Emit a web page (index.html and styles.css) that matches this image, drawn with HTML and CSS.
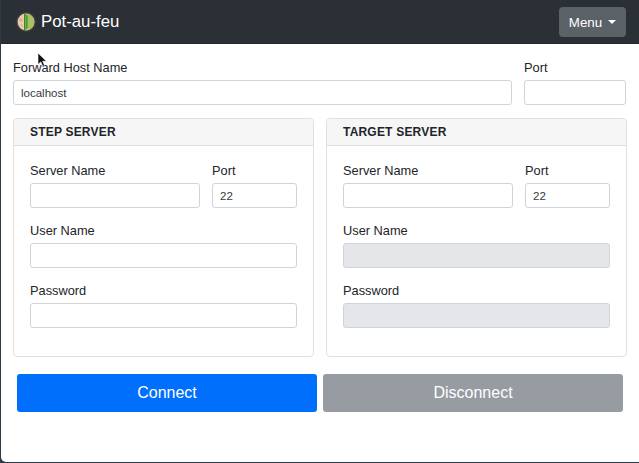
FILE: index.html
```html
<!DOCTYPE html>
<html lang="en">
<head>
<meta charset="utf-8">
<title>Pot-au-feu</title>
<link rel="stylesheet" href="styles.css">
</head>
<body>
<div class="window">
  <nav class="navbar">
    <div class="brand">
      <svg class="logo" width="20" height="20" viewBox="0 0 20 20">
        <circle cx="10" cy="10" r="10" fill="#3f403c"/>
        <circle cx="10" cy="10" r="8.4" fill="#e8cdb4"/>
        <path d="M8 1.84a8.4 8.4 0 0 1 0 16.32z" fill="#2f8a2c"/>
        <path d="M11.5 1.74a8.4 8.4 0 0 1 0 16.52z" fill="#a9c163"/>
        <path d="M9.7 1.7v16.6" stroke="#86b53a" stroke-width="1.2" fill="none"/>
        <path d="M3 7l3-1 1 3-3 1zM3.5 13l3-1 .8 3z" fill="#e3ad97"/>
      </svg>
      <span>Pot-au-feu</span>
    </div>
    <button class="menu">Menu<span class="caret"></span></button>
  </nav>
  <main class="content">
    <div class="row host-row">
      <div class="field grow"><label>Forward Host Name</label><input class="input" value="localhost"></div>
      <div class="field port-wide"><label>Port</label><input class="input"></div>
    </div>
    <div class="cards">
      <section class="card">
        <h2 class="card-header">STEP SERVER</h2>
        <div class="card-body">
          <div class="row">
            <div class="field grow"><label>Server Name</label><input class="input"></div>
            <div class="field port"><label>Port</label><input class="input" value="22"></div>
          </div>
          <div class="field"><label>User Name</label><input class="input"></div>
          <div class="field"><label>Password</label><input class="input" type="password"></div>
        </div>
      </section>
      <section class="card">
        <h2 class="card-header">TARGET SERVER</h2>
        <div class="card-body">
          <div class="row">
            <div class="field grow"><label>Server Name</label><input class="input"></div>
            <div class="field port"><label>Port</label><input class="input" value="22"></div>
          </div>
          <div class="field"><label>User Name</label><input class="input" disabled></div>
          <div class="field"><label>Password</label><input class="input" type="password" disabled></div>
        </div>
      </section>
    </div>
    <div class="actions">
      <button class="btn primary">Connect</button>
      <button class="btn secondary">Disconnect</button>
    </div>
  </main>
  <svg class="cursor" width="12" height="16" viewBox="0 0 12 16"><path d="M1 1v11.5l2.8-2.6 1.9 4.4 1.9-.8-1.9-4.3h3.8z" fill="#111" stroke="#fff" stroke-width=".6"/></svg>
</div>
</body>
</html>
```
FILE: styles.css
```css
* { box-sizing: border-box; }
html, body { margin: 0; height: 100%; }
body { background: #2e3a46; overflow: hidden; }
.window {
  position: relative;
  width: 638px;
  height: 462px;
  margin-left: 1px;
  background: #fff;
  border-bottom-left-radius: 5px;
  font-family: "Liberation Sans", Arial, sans-serif;
  font-size: 12.8px;
  color: #212529;
  overflow: hidden;
}
.navbar {
  height: 44px;
  background: #2b3036;
  border-bottom: 1px solid #25292e;
  display: flex;
  align-items: center;
  justify-content: space-between;
  padding: 0 13px 0 15px;
}
.brand { display: flex; align-items: center; gap: 5px; color: #fff; font-size: 16.8px; }
.logo { display: block; }
.menu {
  width: 67px;
  height: 30px;
  margin-top: 1px;
  background: #5a6268;
  border: 0;
  border-radius: 4px;
  color: #fff;
  font: 13.3px "Liberation Sans", Arial, sans-serif;
  display: flex;
  align-items: center;
  justify-content: center;
  gap: 6px;
}
.caret { border-top: 4px solid #fff; border-left: 4px solid transparent; border-right: 4px solid transparent; }
.content { padding: 15px 12px 0 12px; }
.row { display: flex; gap: 12px; }
.grow { flex: 1; min-width: 0; }
.field { display: flex; flex-direction: column; margin-bottom: 13px; }
.field label { line-height: 17px; margin-bottom: 4px; }
.port-wide { width: 102px; }
.port { width: 85px; }
.host-row { padding-right: 1px; }
.input {
  width: 100%;
  height: 25px;
  padding: 0 7px;
  background: #fff;
  border: 1px solid #ced4da;
  border-radius: 3px;
  font: 11.5px "Liberation Sans", Arial, sans-serif;
  color: #343a40;
  outline: 0;
}
.input:disabled { background: #e4e6ea; }
.cards { display: flex; gap: 12px; }
.card { flex: 1; height: 239px; border: 1px solid #e0e0e0; border-radius: 4px; }
.card-header {
  margin: 0;
  height: 27px;
  padding: 0 16px;
  display: flex;
  align-items: center;
  background: #f6f6f6;
  border-bottom: 1px solid #e0e0e0;
  border-radius: 3px 3px 0 0;
  font-size: 12px;
  font-weight: 700;
  letter-spacing: .2px;
}
.card-body { padding: 16px 16px 0; }
.card-body .field { margin-bottom: 14px; }
.actions { display: flex; gap: 6px; margin: 17px 4px 0; }
.btn {
  flex: 1;
  height: 38px;
  border: 0;
  border-radius: 3px;
  color: #fff;
  font: 16px "Liberation Sans", Arial, sans-serif;
}
.primary { background: #006ffc; }
.secondary { background: #979ca3; }
.cursor { position: absolute; left: 36px; top: 52px; }
```
